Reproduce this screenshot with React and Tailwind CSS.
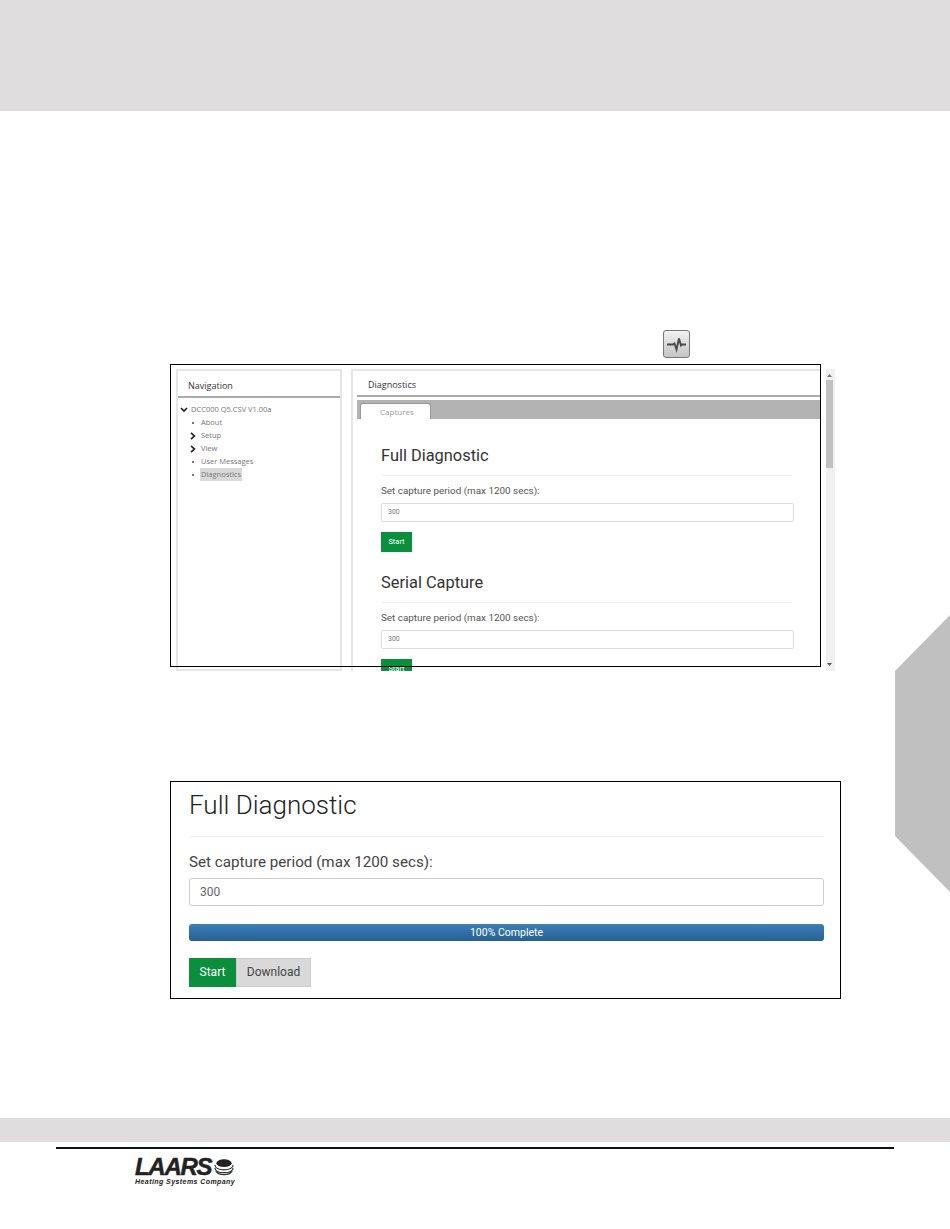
import React from "react";

function TreeItem({ mark, children, active, indent = true }) {
  return (
    <div className={`flex items-center h-[13px] ${indent ? "pl-[12px]" : "pl-[2px]"}`}>
      <span className="w-[11px] flex justify-start shrink-0">
        {mark === "open" && (
          <svg width="8" height="6" viewBox="0 0 8 6"><path d="M1 1l3 3 3-3" fill="none" stroke="#222" strokeWidth="1.700" /></svg>
        )}
        {mark === "closed" && (
          <svg width="6" height="8" viewBox="0 0 6 8"><path d="M1 .8L4.400 4 1 7.200" fill="none" stroke="#222" strokeWidth="1.700" /></svg>
        )}
        {mark === "dot" && <span className="ml-[2px] w-[2px] h-[2px] bg-[#777] block" />}
      </span>
      <span className={`text-[7.500px] leading-[13px] text-[#777] font-['Open_Sans',sans-serif] ${active ? "bg-[#d9d9d9] px-[1px] -ml-[1px] text-[#555]" : ""}`}>{children}</span>
    </div>
  );
}

function Section({ title, mt }) {
  return (
    <div className={mt}>
      <h2 className="text-[16.400px] leading-[18px] text-[#333] font-['Roboto',sans-serif]">{title}</h2>
      <div className="h-px bg-[#eee] mt-[10px] w-[411px]" />
      <div className="text-[9.900px] leading-[12px] text-[#555] mt-[9px] font-['Roboto',sans-serif]">Set capture period (max 1200 secs):</div>
      <div className="mt-[6px] h-[19px] w-[413px] border border-[#ddd] rounded-[2px] pl-[6px] text-[7px] leading-[17px] text-[#777] font-['Roboto',sans-serif]">300</div>
      <div className="mt-[10px] h-[20px] w-[31px] bg-[#0b8f3c] text-white text-[7.500px] leading-[20px] text-center font-['Roboto',sans-serif]">Start</div>
    </div>
  );
}

export default function App() {
  return (
    <div className="relative h-[1229px] w-[950px] overflow-hidden bg-white">
      <div className="h-[111px] bg-[#dfdddd]" />

      <div className="ml-[663px] mt-[219px] w-[27px] h-[28px] rounded-[3px] border border-[#777] bg-gradient-to-b from-[#f2f2f2] to-[#c4c4c4] flex items-center justify-center">
        <svg width="23" height="18" viewBox="0 0 23 18">
          <path d="M2 9.500h6l1.500-1 2 6 2.500-11 2 7 1-1h4" fill="none" stroke="#4a4a4a" strokeWidth="1.900" />
        </svg>
      </div>

      <div className="relative ml-[170px] mt-[6px] w-[671px] h-[302px]">
        <div className="pl-[6px] pt-[5px]">
          <div className="flex h-[302px] w-[659px] overflow-hidden">
            <div className="w-[166px] h-full border-2 border-[#e6e6e6] shrink-0">
              <div className="h-[27px] border-b-2 border-[#aaa] pl-[10px] text-[9px] leading-[29px] text-[#333] font-['Open_Sans',sans-serif]">Navigation</div>
              <div className="pt-[5px]">
                <TreeItem mark="open" indent={false}>DCC000 Q5.CSV V1.00a</TreeItem>
                <TreeItem mark="dot">About</TreeItem>
                <TreeItem mark="closed">Setup</TreeItem>
                <TreeItem mark="closed">View</TreeItem>
                <TreeItem mark="dot">User Messages</TreeItem>
                <TreeItem mark="dot" active>Diagnostics</TreeItem>
              </div>
            </div>

            <div className="ml-[9px] w-[469px] h-[302px] border-l-2 border-t-2 border-[#e6e6e6] shrink-0 overflow-hidden">
              <div className="h-[26px] border-b-2 border-[#aaa] pl-[11px] ml-[4px] -mr-[1px] text-[9px] leading-[28px] text-[#333] font-['Open_Sans',sans-serif]">Diagnostics</div>
              <div className="mt-[3px] ml-[4px] h-[19px] bg-[#b3b3b3] flex items-end pl-[3px]">
                <div className="w-[71px] h-[16px] bg-white border border-b-0 border-[#999] rounded-t-[3px] pl-[19px] text-[8px] leading-[15px] text-[#999] font-['Open_Sans',sans-serif]">Captures</div>
              </div>
              <div className="pl-[28px] pt-[28px]">
                <Section title="Full Diagnostic" />
                <Section title="Serial Capture" mt="mt-[22px]" />
              </div>
            </div>

            <div className="ml-[6px] w-[9px] h-full bg-[#f0f0f0] flex flex-col items-start shrink-0">
              <svg width="5" height="3" viewBox="0 0 5 3" className="mt-[5px] ml-[1px]"><path d="M2.500 0L5 3H0z" fill="#777" /></svg>
              <div className="w-[7px] h-[88px] mt-[3px] bg-[#c1c1c1]" />
              <div className="flex-1" />
              <svg width="5" height="3" viewBox="0 0 5 3" className="mb-[5px] ml-[1px]"><path d="M2.500 3L5 0H0z" fill="#555" /></svg>
            </div>
          </div>
        </div>
        <div className="absolute left-0 top-0 w-[651px] h-[303px] border border-black pointer-events-none" />
      </div>

      <div className="ml-[170px] mt-[115px] w-[671px] h-[218px] border border-black px-[18px] font-['Roboto',sans-serif]">
        <h2 className="text-[26px] leading-[30px] pt-[8px] h-[38px] text-[#222] font-light">Full Diagnostic</h2>
        <div className="h-px bg-[#eee] mt-[16px] w-[635px]" />
        <div className="mt-[15px] text-[15.200px] leading-[20px] text-[#444]">Set capture period (max 1200 secs):</div>
        <div className="mt-[6px] w-[635px] h-[28px] border border-[#ccc] rounded-[3px] pl-[10px] text-[12px] leading-[26px] text-[#666]">300</div>
        <div className="mt-[18px] w-[635px] h-[17px] rounded-[3px] bg-gradient-to-b from-[#3a80b9] to-[#286090] text-white text-[10.500px] leading-[17px] text-center">100% Complete</div>
        <div className="mt-[17px] flex h-[29px] text-[12px] leading-[29px]">
          <div className="w-[47px] bg-[#0b8f3c] text-white text-center">Start</div>
          <div className="w-[75px] bg-[#d9d9d9] border border-[#ccc] text-[#444] text-center leading-[27px]">Download</div>
        </div>
      </div>

      <svg className="absolute left-[895px] top-[615px]" width="55" height="277" viewBox="0 0 55 277">
        <path d="M55 0L0 56V221L55 277z" fill="#c0c0c0" />
      </svg>

      <div className="mt-[119px] h-[24px] bg-[#dfdddd]" />
      <div className="mt-[5px] ml-[56px] w-[838px] h-[2px] bg-[#111]" />
      <div className="ml-[135px] mt-[7px] w-[101px] relative">
        <div className="flex items-center h-[21px]">
          <span className="text-[24px] leading-[21px] font-black italic tracking-[-1.300px] text-[#222] [-webkit-text-stroke:0.500px_#222] font-['Liberation_Sans',sans-serif]">LAARS</span>
          <svg width="22" height="20" viewBox="0 0 23 20" className="ml-[2px]">
            <ellipse cx="11.500" cy="6" rx="8" ry="4" fill="#222" />
            <path d="M2 8c0 3 4 5 9.500 5S21 11 21 8M2 11c0 3 4 5 9.500 5S21 14 21 11M3 14c1 2.500 4.500 4 8.500 4s7.500-1.500 8.500-4" fill="none" stroke="#333" strokeWidth="1.300" />
          </svg>
        </div>
        <div className="text-[7px] leading-[9px] mt-[0px] font-bold italic text-[#222] whitespace-nowrap font-['Liberation_Sans',sans-serif] tracking-[0.430px]">Heating Systems Company</div>
      </div>
    </div>
  );
}
